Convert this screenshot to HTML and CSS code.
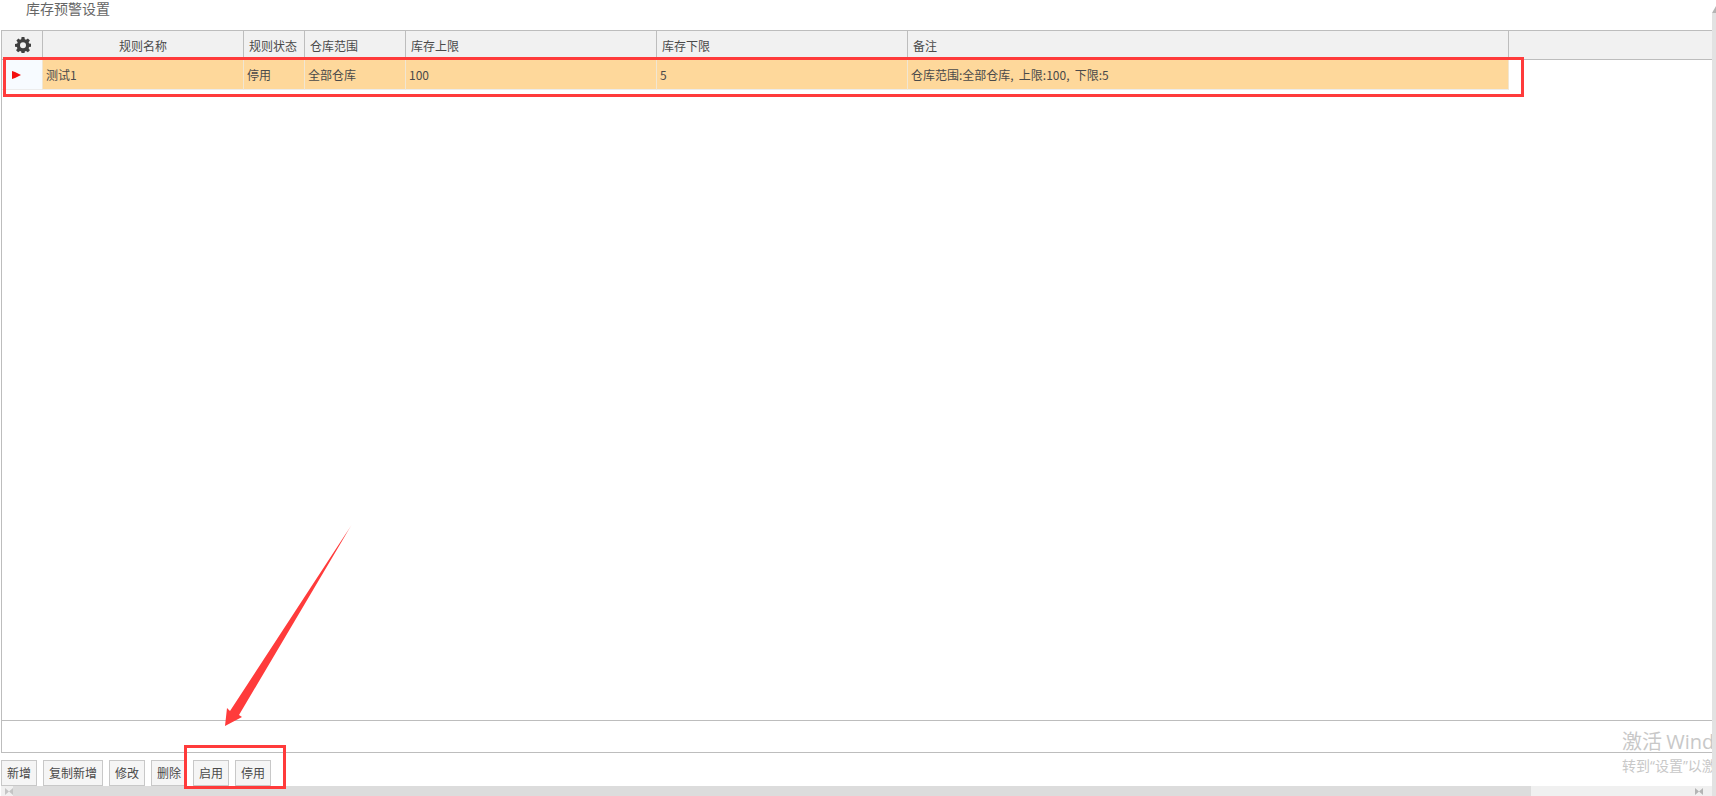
FILE: index.html
```html
<!DOCTYPE html>
<html lang="zh-CN">
<head>
<meta charset="utf-8">
<title>库存预警设置</title>
<link rel="stylesheet" href="styles.css">
</head>
<body>
<div class="page">
  <div class="main">
    <h1 class="title">库存预警设置</h1>
    <div class="panel">
      <div class="grid">
        <div class="row head">
          <div class="cell c0 gear"><svg width="16" height="16" viewBox="0 0 16 16"><path fill="#3f3f3f" fill-rule="evenodd" d="M6.600 0h2.800l.4 2.200 1.200.5L12.900 1.400l2 2-1.300 1.900.5 1.200 2.200.4v2.800l-2.200.4-.5 1.200 1.300 1.900-2 2-1.900-1.300-1.200.5-.4 2.200H6.600l-.4-2.200-1.200-.5-1.900 1.300-2-2 1.300-1.900-.5-1.200L0 9.700V6.900l2.200-.4.5-1.200L1.400 3.400l2-2L5 2.700l1.200-.5zM8 5.300a3 3 0 1 0 0 6 3 3 0 0 0 0-6z"/></svg></div>
          <div class="cell c1 center">规则名称</div>
          <div class="cell c2">规则状态</div>
          <div class="cell c3">仓库范围</div>
          <div class="cell c4">库存上限</div>
          <div class="cell c5">库存下限</div>
          <div class="cell c6">备注</div>
          <div class="cell fill"></div>
        </div>
        <div class="row data">
          <div class="cell c0 marker"><svg width="9" height="8" viewBox="0 0 9 8"><path fill="#f40f0f" d="M0 0l3 1 6 3-6 3-3 1z"/></svg></div>
          <div class="cell c1">测试1</div>
          <div class="cell c2">停用</div>
          <div class="cell c3">全部仓库</div>
          <div class="cell c4">100</div>
          <div class="cell c5">5</div>
          <div class="cell c6 note">仓库范围:全部仓库, 上限:100, 下限:5</div>
        </div>
      </div>
      <div class="footer-row"></div>
    </div>
    <div class="toolbar">
      <button class="btn">新增</button>
      <button class="btn">复制新增</button>
      <button class="btn">修改</button>
      <button class="btn">删除</button>
      <button class="btn">启用</button>
      <button class="btn">停用</button>
    </div>
    <div class="hscroll">
      <svg class="arr" width="8" height="9" viewBox="0 0 8 9"><path fill="#c4c4c4" d="M0 1l4 3.500-4 3.500zM8 1v7L4 4.500z"/></svg>
      <div class="thumb"></div>
      <svg class="arr" width="8" height="9" viewBox="0 0 8 9"><path fill="#b4b4b4" d="M0 1l4 3.500-4 3.500zM8 1v7L4 4.500z"/></svg>
    </div>
  </div>
  <div class="vscroll">
    <svg class="up" width="4" height="7" viewBox="0 0 4 7"><path fill="#b4b4b4" d="M4 0v7H0z"/></svg>
    <div class="vtrack"></div>
  </div>
</div>

<div class="mark-row"></div>
<div class="mark-btns"></div>
<svg class="arrow" width="140" height="210" viewBox="0 0 140 210"><defs><linearGradient id="fade" gradientUnits="userSpaceOnUse" x1="126" y1="1" x2="0" y2="201"><stop offset="0" stop-color="#ff3b3b" stop-opacity=".5"/><stop offset=".05" stop-color="#ff3b3b"/></linearGradient></defs><path fill="url(#fade)" d="M126.500 0L14 190 17 192 0 201 2 183 5 186z"/></svg>
<div class="watermark">
  <div class="wm1">激活 Windows</div>
  <div class="wm2">转到“设置”以激活 Windows。</div>
</div>
</body>
</html>
```
FILE: styles.css
```css
* { box-sizing: border-box; }
html, body { margin: 0; height: 100%; overflow: hidden; background: #fff; }
body { font-family: "Microsoft YaHei", "Noto Sans CJK SC", "Liberation Sans", sans-serif; font-size: 12px; color: #4a4a4a; }
.page { display: flex; width: 1716px; height: 796px; }
.main { flex: 1; min-width: 0; display: flex; flex-direction: column; padding-left: 1px; }
.vscroll { width: 4px; display: flex; flex-direction: column; padding-top: 6px; }
.up { flex: none; display: block; }
.vtrack { flex: 1; background: #e2e2e2; }
.title { margin: 0; height: 30px; padding: 0 0 0 25px; font-size: 14px; font-weight: 400; line-height: 16px; color: #666; flex: none; }
.panel { height: 723px; flex: none; border: 1px solid #bdbdbd; border-right: 0; display: flex; flex-direction: column; }
.grid { flex: 1; }
.footer-row { height: 32px; border-top: 1px solid #bdbdbd; }
.row { display: flex; }
.head { height: 29px; background: #f1f1f1; border-bottom: 1px solid #bdbdbd; line-height: 29px; }
.data { height: 30px; line-height: 29px; }
.cell { flex: none; padding-left: 5px; white-space: nowrap; overflow: hidden; }
.head .cell { border-right: 1px solid #bdbdbd; }
.data .cell { background: #fed89b; border-right: 1px solid #f1e6d2; border-bottom: 1px solid #ececec; padding-left: 3px; }
.head .cell.fill { flex: 1; border-right: 0; }
.c0 { width: 41px; }
.c1 { width: 201px; }
.c2 { width: 61px; }
.c3 { width: 101px; }
.c4 { width: 251px; }
.c5 { width: 251px; }
.c6 { width: 601px; }
.head .center { text-align: center; padding: 0; }
.head .gear { display: flex; align-items: center; justify-content: center; padding: 0 0 0 1px; }
.data .marker { background: #f7fbff; display: flex; align-items: center; padding: 0 0 0 10px; }
.note { word-spacing: 2.5px; }
.toolbar { height: 33px; flex: none; padding-top: 7px; display: flex; gap: 6px; }
.btn { height: 26px; padding: 0 5px; border: 1px solid #c8c8c8; background: #f5f5f5; color: #4a4a4a; font: inherit; line-height: 24px; }
.hscroll { height: 10px; flex: none; background: #f0f0f0; display: flex; align-items: center; padding: 0 9px 0 4px; }
.thumb { width: 1518px; height: 10px; background: #dcdcdc; }
.arr { flex: none; }
.hscroll .arr:last-child { margin-left: auto; }
.mark-row, .mark-btns { position: absolute; border: 3px solid #ff3b3b; }
.mark-row { left: 3px; top: 57px; width: 1521px; height: 40px; }
.mark-btns { left: 184px; top: 745px; width: 102px; height: 44px; }
.arrow { position: absolute; left: 225px; top: 525px; }
.watermark { position: absolute; left: 1622px; top: 728px; width: 90px; overflow: hidden; white-space: nowrap; color: #c8c8c8; font-family: "Open Sans", "Noto Sans CJK SC", sans-serif; }
.wm1 { font-size: 20px; line-height: 28px; word-spacing: -1px; }
.wm2 { font-size: 14px; line-height: 20px; }
```
